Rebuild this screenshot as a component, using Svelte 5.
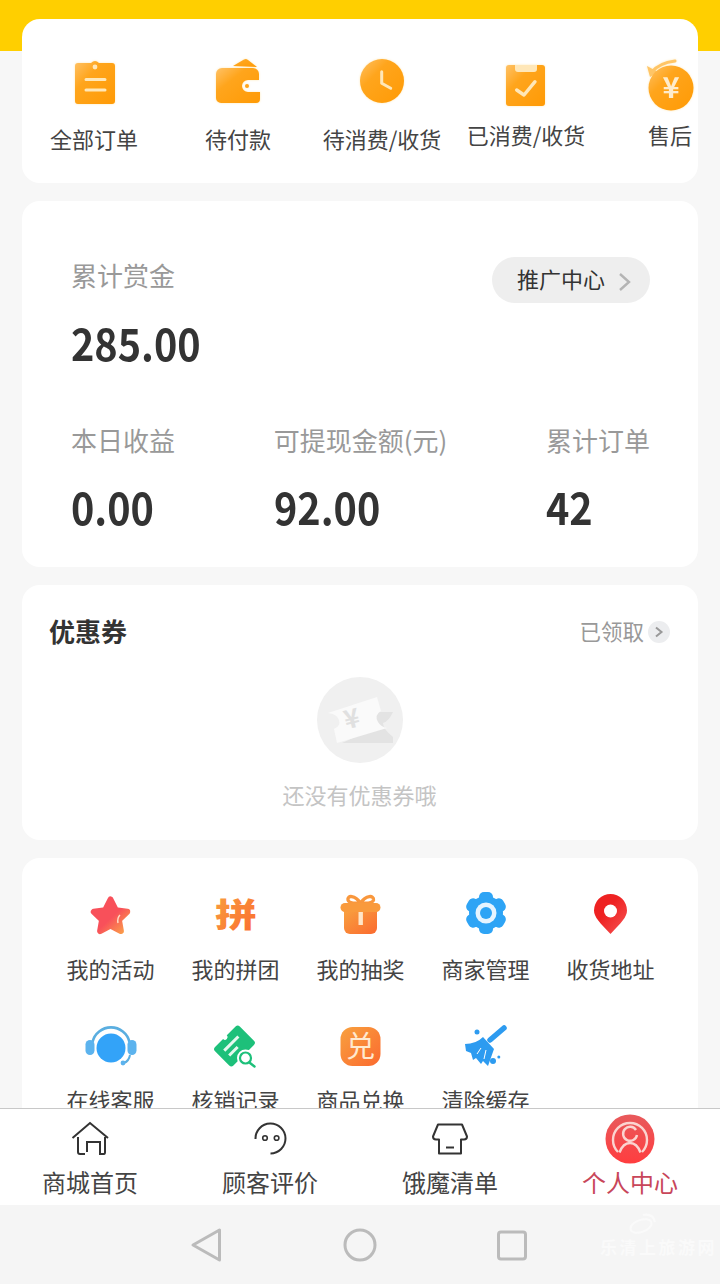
<script lang="ts">
  const orders = [
    { id: "all", label: "全部订单" },
    { id: "pay", label: "待付款" },
    { id: "wait", label: "待消费/收货" },
    { id: "done", label: "已消费/收货", raised: true },
    { id: "after", label: "售后", raised: true },
  ];
  const stats = [
    { label: "本日收益", value: "0.00" },
    { label: "可提现金额(元)", value: "92.00" },
    { label: "累计订单", value: "42" },
  ];
  const tools = [
    { id: "star", label: "我的活动" },
    { id: "pin", label: "我的拼团" },
    { id: "gift", label: "我的抽奖" },
    { id: "gear", label: "商家管理" },
    { id: "map", label: "收货地址" },
    { id: "head", label: "在线客服" },
    { id: "ticket", label: "核销记录" },
    { id: "swap", label: "商品兑换" },
    { id: "broom", label: "清除缓存" },
  ];
  const tabs = [
    { id: "home", label: "商城首页" },
    { id: "face", label: "顾客评价" },
    { id: "shop", label: "饿魔清单" },
    { id: "me", label: "个人中心", active: true },
  ];
  const pale = "#ffe7b8";
</script>

<div class="phone">
  <svg class="defs" width="0" height="0" aria-hidden="true">
    <defs>
      <linearGradient id="amber" x1="0" y1="0" x2="1" y2="1">
        <stop offset="0" stop-color="#ffc267" />
        <stop offset="0.35" stop-color="#ffa51c" />
        <stop offset="1" stop-color="#ff9a05" />
      </linearGradient>
      <linearGradient id="tang" x1="0" y1="0" x2="1" y2="1">
        <stop offset="0" stop-color="#f8a13f" />
        <stop offset="1" stop-color="#fb6a2f" />
      </linearGradient>
      <linearGradient id="rose" x1="0" y1="0" x2="1" y2="1">
        <stop offset="0.55" stop-color="#f8505a" />
        <stop offset="1" stop-color="#fba24a" />
      </linearGradient>
      <linearGradient id="redpin" x1="0" y1="0" x2="1" y2="1">
        <stop offset="0.4" stop-color="#ee2222" />
        <stop offset="1" stop-color="#f65555" />
      </linearGradient>
      <linearGradient id="redme" x1="0" y1="0" x2="0" y2="1">
        <stop offset="0" stop-color="#e85a5c" />
        <stop offset="1" stop-color="#ff3d3f" />
      </linearGradient>
    </defs>
  </svg>

  <div class="scroll">
    <div class="hero"></div>
    <div class="cards">
      <section class="card orders">
        {#each orders as o}
          <div class="order" class:raised={o.raised}>
            <svg class="order-ico" viewBox="0 0 50 52" width="50" height="52">
              {#if o.id === "all"}
                <path d="M6 9a3 3 0 0 1 3-3h13q4-4 8 0h13a3 3 0 0 1 3 3v35a3 3 0 0 1-3 3H9a3 3 0 0 1-3-3z" fill="url(#amber)" />
                <circle cx="26" cy="10" r="2.400" fill={pale} />
                <path d="M17 22.500h19M17 33h19" stroke={pale} stroke-width="3" stroke-linecap="round" />
              {:else if o.id === "pay"}
                <path d="M20 9L31 2.500q2-1 4 .5L44 10z" fill="url(#amber)" />
                <path d="M3 17a6 6 0 0 1 6-6h31a6 6 0 0 1 6 6v6H35a6 6 0 0 0 0 12h12v7a4 4 0 0 1-4 4H8a5 5 0 0 1-5-5z" fill="url(#amber)" />
                <circle cx="34" cy="29" r="2" fill="#ffa51c" />
              {:else if o.id === "wait"}
                <circle cx="25" cy="24" r="22" fill="url(#amber)" />
                <path d="M24.700 14.700V26.300l9 5" fill="none" stroke={pale} stroke-width="3" stroke-linecap="round" stroke-linejoin="round" />
              {:else if o.id === "done"}
                <path d="M5 11a3 3 0 0 1 3-3h33a3 3 0 0 1 3 3v35a3 3 0 0 1-3 3H8a3 3 0 0 1-3-3z" fill="url(#amber)" />
                <path d="M14 8h22v4a3 3 0 0 1-3 3H17a3 3 0 0 1-3-3z" fill={pale} />
                <path d="M15.700 33l7.300 5 11-13.300" fill="none" stroke={pale} stroke-width="3.400" stroke-linecap="round" stroke-linejoin="round" />
              {:else}
                <path d="M7 15Q14 6 30 4" fill="none" stroke="#ffc566" stroke-width="3" stroke-linecap="round" />
                <path d="M2 9l3 11 8-5z" fill="#ffc566" />
                <circle cx="26" cy="31" r="22.500" fill="url(#amber)" />
                <text x="26" y="41" class="yen">¥</text>
              {/if}
            </svg>
            <div class="order-label">{o.label}</div>
          </div>
        {/each}
      </section>

      <section class="card stats">
        <div class="stat-top">
          <div class="stat">
            <div class="stat-label">累计赏金</div>
            <div class="stat-value">285.00</div>
          </div>
          <div class="promo">
            推广中心
            <svg viewBox="0 0 14 20" width="14" height="20">
              <path d="M2 2l9 8-9 8" fill="none" stroke="#b4b4b4" stroke-width="2.400" />
            </svg>
          </div>
        </div>
        <div class="stat-row">
          {#each stats as s}
            <div class="stat">
              <div class="stat-label">{s.label}</div>
              <div class="stat-value">{s.value}</div>
            </div>
          {/each}
        </div>
      </section>

      <section class="card coupon">
        <div class="coupon-head">
          <div class="coupon-title">优惠券</div>
          <div class="coupon-more">
            已领取
            <span class="more-dot">
              <svg viewBox="0 0 10 12" width="10" height="12">
                <path d="M2 1.500L7.500 6 2 10.500" fill="none" stroke="#999" stroke-width="2" />
              </svg>
            </span>
          </div>
        </div>
        <div class="empty">
          <svg viewBox="0 0 86 86" width="86" height="86">
            <circle cx="43" cy="43" r="43" fill="#f0f0f0" />
            <path d="M25 66H76V60Q66 52 66 46 72 44 76 35H57L60 50z" fill="#e3e3e3" />
            <path d="M11 36L60 20l4 14q-7 4-3 11 3 5 9 6l-50 15-3-14q7-3 5-9-2-6-11-7z" fill="#fafafa" />
            <text x="35" y="51" class="empty-yen" transform="rotate(-14 35 43)">¥</text>
          </svg>
          <div class="empty-text">还没有优惠券哦</div>
        </div>
      </section>

      <section class="card tools">
        {#each tools as t}
          <div class="tool">
            <svg class="tool-ico" viewBox="0 0 48 48" width="48" height="48">
              {#if t.id === "star"}
                <path d="M23.500 8.500l5.300 10.700 11.400 1.600-8.300 8 2 11.200-10.400-5.500-10.400 5.500 2-11.200-8.300-8 11.400-1.600z" fill="url(#rose)" stroke="url(#rose)" stroke-width="6" stroke-linejoin="round" />
                <path d="M33 24q-3 3-2 8" fill="none" stroke="#ffd9c4" stroke-width="1.500" />
              {:else if t.id === "pin"}
                <text class="pin-glyph" transform="translate(24 36) scale(1.050 .82)">拼</text>
              {:else if t.id === "gift"}
                <path d="M23.500 12C18 4 10 4 11 9c.5 3 6 3.500 12.500 3C30 12.500 36 12 36.500 9c.5-5-7.500-5-13 3z" fill="none" stroke="#f9973c" stroke-width="3.400" />
                <path d="M7 19h33v18a6 6 0 0 1-6 6H13a6 6 0 0 1-6-6z" fill="url(#tang)" />
                <rect x="3.500" y="12" width="40" height="9" rx="4.500" fill="#f99a3c" />
                <rect x="21.500" y="21" width="4.400" height="13" fill="#ffe6c8" />
              {:else if t.id === "gear"}
                <g fill="#2ea4f5" transform="translate(0 -2)">
                  <circle cx="24" cy="24" r="17" />
                  {#each [0, 60, 120] as a}
                    <rect x="17" y="3" width="14" height="42" rx="5" transform="rotate({a} 24 24)" />
                  {/each}
                </g>
                <circle cx="24" cy="22" r="10.500" fill="#e6f4ff" />
                <circle cx="24" cy="22" r="6" fill="#2ea4f5" />
              {:else if t.id === "map"}
                <path d="M23.500 43C13 32 7 26 7 19.500a16.500 16.500 0 0 1 33 0c0 6.500-6 12.500-16.500 23.500z" fill="url(#redpin)" />
                <circle cx="23.500" cy="20" r="6.500" fill="#fff" />
              {:else if t.id === "head"}
                <path d="M5.500 20a19 19 0 0 1 37 0" fill="none" stroke="#5aaee0" stroke-width="2.600" />
                <rect x="-1.500" y="18" width="9" height="15" rx="4.500" fill="#5cb3ee" />
                <rect x="40.500" y="18" width="9" height="15" rx="4.500" fill="#5cb3ee" />
                <circle cx="24" cy="26" r="14.500" fill="#33a3f8" />
                <path d="M43 33q-1 6-6 8" fill="none" stroke="#5aaee0" stroke-width="2" />
                <circle cx="36" cy="41" r="2.400" fill="#5cb3ee" />
              {:else if t.id === "ticket"}
                <g transform="rotate(-45 22.500 24)">
                  <rect x="5" y="11" width="35" height="26" rx="3" fill="#1dc07a" />
                  <circle cx="22" cy="11" r="2.600" fill="#fff" />
                  <circle cx="22" cy="37" r="2.600" fill="#fff" />
                  <path d="M12 20h20M12 27h12" stroke="#e6f8ef" stroke-width="3" />
                </g>
                <circle cx="33.500" cy="36" r="8.500" fill="#fff" />
                <circle cx="33.500" cy="36" r="5.500" fill="none" stroke="#1dc07a" stroke-width="2.200" />
                <path d="M38 41l4.500 3.500" stroke="#1dc07a" stroke-width="2.400" stroke-linecap="round" />
              {:else if t.id === "swap"}
                <rect x="3.500" y="5" width="40" height="39" rx="12" fill="url(#tang)" />
                <text x="23.500" y="35" class="swap-glyph">兑</text>
              {:else}
                <path d="M42 6L28 18" stroke="#2d9bf0" stroke-width="5.500" stroke-linecap="round" />
                <path d="M21 15L32 27 26 44 21 39 19 42 14 36 11 38 9 31 4 29 3 22Q14 22 21 15z" fill="#2d9bf0" />
                <path d="M19 26l-4 6M24 28l-2 9" stroke="#fff" stroke-width="1" />
                <circle cx="15" cy="10" r="2.500" fill="#2d9bf0" />
                <circle cx="31" cy="39" r="3" fill="#2d9bf0" />
                <circle cx="36.800" cy="35" r="1.500" fill="#2d9bf0" />
              {/if}
            </svg>
            <div class="tool-label">{t.label}</div>
          </div>
        {/each}
      </section>
    </div>
  </div>

  <nav class="tabbar">
    {#each tabs as t}
      <div class="tab" class:active={t.active}>
        <svg class="tab-ico" viewBox="0 0 50 50" width="50" height="50">
          {#if t.id === "home"}
            <g fill="none" stroke="#333" stroke-width="2">
              <path d="M7.500 23L25 8l18 15" />
              <path d="M13 22v15q0 2 2 2h5M22 37V27h13v12h4q1 0 1-2V22" />
            </g>
          {:else if t.id === "face"}
            <g fill="none" stroke="#333">
              <path d="M10.500 24a15 15 0 1 1 15 14.500" stroke-width="2" />
              <circle cx="20" cy="23" r="2.300" stroke-width="1.600" />
              <circle cx="31.600" cy="23" r="2.300" stroke-width="1.600" />
            </g>
          {:else if t.id === "shop"}
            <g fill="none" stroke="#333" stroke-width="2" stroke-linejoin="round">
              <path d="M13 9.500h24l5 12q0 3-3 3h-3v14H14v-14h-3q-3 0-3-3z" />
              <path d="M21 32.500h8" />
            </g>
          {:else}
            <circle cx="25" cy="24" r="24.500" fill="url(#redme)" />
            <g fill="none" stroke="#fbd4d0" stroke-width="2.400">
              <path d="M13 37a17 17 0 1 1 24 0" />
              <path d="M31 15a7 7 0 1 0 1 5" />
              <path d="M14.500 37.500Q18 28 25 28t10.500 9.500" />
            </g>
          {/if}
        </svg>
        <div class="tab-label">{t.label}</div>
      </div>
    {/each}
  </nav>

  <div class="navbar">
    <svg class="nav-back" viewBox="0 0 32 36" width="32" height="36">
      <path d="M3 18L29.500 3v30z" fill="none" stroke="#bbb" stroke-width="3" stroke-linejoin="round" />
    </svg>
    <svg class="nav-home" viewBox="0 0 36 36" width="36" height="36">
      <circle cx="18" cy="18" r="15" fill="none" stroke="#bbb" stroke-width="3" />
    </svg>
    <svg viewBox="0 0 36 36" width="36" height="36">
      <rect x="4.500" y="5" width="27" height="27" rx="2.500" fill="none" stroke="#bbb" stroke-width="3" />
    </svg>
    <div class="watermark">
      <svg viewBox="0 0 60 24" width="60" height="24">
        <g fill="none" stroke="#fafafa" stroke-width="2">
          <ellipse cx="12" cy="15" rx="11" ry="6" transform="rotate(-20 12 15)" />
          <path d="M14 4q10-2 12 7" />
        </g>
      </svg>
      <span>乐清上旅游网</span>
    </div>
  </div>
</div>

<style>
  :global(body) {
    background: #f7f7f7;
  }
  .phone {
    position: relative;
    display: flex;
    flex-direction: column;
    width: 720px;
    height: 1284px;
    overflow: hidden;
    font-family: "Noto Sans CJK SC", "Noto Sans", sans-serif;
    background: #f7f7f7;
    color: #333;
  }
  svg {
    overflow: visible;
  }
  .defs {
    position: absolute;
  }
  .scroll {
    flex: 1;
    min-height: 0;
    overflow: hidden;
  }
  .hero {
    height: 51px;
    background: #ffcf00;
  }
  .cards {
    display: flex;
    flex-direction: column;
    gap: 18px;
    margin: -32px 22px 0;
  }
  .card {
    background: #fff;
    border-radius: 18px;
  }

  .orders {
    display: flex;
    height: 164px;
    overflow: hidden;
  }
  .order {
    flex: 0 0 144px;
    display: flex;
    flex-direction: column;
    align-items: center;
    padding-top: 38px;
  }
  .order-ico {
    display: block;
    filter: drop-shadow(0 0 1px #ffe9b8);
  }
  .order-label {
    margin-top: 14px;
    font-size: 22px;
    line-height: 30px;
    white-space: nowrap;
    color: #444;
  }
  .raised .order-label {
    margin-top: 10px;
  }
  .yen {
    font-size: 29px;
    font-weight: 700;
    text-anchor: middle;
    fill: #ffeccb;
  }

  .stats {
    height: 366px;
    box-sizing: border-box;
    padding: 54px 48px 0 49px;
  }
  .stat-top {
    display: flex;
    justify-content: space-between;
    align-items: flex-start;
  }
  .stat-label {
    font-size: 26px;
    line-height: 40px;
    color: #999;
  }
  .stat-value {
    margin-top: 23px;
    font-size: 44px;
    line-height: 48px;
    font-weight: 700;
    color: #333;
    transform: scaleX(0.9);
    transform-origin: left center;
  }
  .stat-row {
    display: flex;
    justify-content: space-between;
    margin-top: 54px;
  }
  .stat-row .stat-value {
    margin-top: 22px;
  }
  .promo {
    display: flex;
    align-items: center;
    gap: 13px;
    height: 46px;
    width: 158px;
    margin-top: 2px;
    box-sizing: border-box;
    padding: 0 0 4px 25px;
    border-radius: 23px;
    background: #eeeeee;
    font-size: 22px;
    color: #333;
  }
  .promo svg {
    margin-top: 8px;
  }

  .coupon {
    height: 255px;
    box-sizing: border-box;
    padding: 26px 28px 0 27px;
  }
  .coupon-head {
    display: flex;
    justify-content: space-between;
    align-items: center;
    height: 38px;
  }
  .coupon-title {
    font-size: 26px;
    font-weight: 700;
    color: #333;
  }
  .coupon-more {
    display: flex;
    align-items: center;
    gap: 4px;
    font-size: 21.500px;
    color: #999;
  }
  .more-dot {
    display: flex;
    align-items: center;
    justify-content: center;
    width: 22px;
    height: 22px;
    margin-top: 4px;
    border-radius: 50%;
    background: #ecedef;
  }
  .empty {
    display: flex;
    flex-direction: column;
    align-items: center;
    margin-top: 28px;
  }
  .empty svg {
    display: block;
  }
  .empty-yen {
    font-size: 26px;
    font-weight: 700;
    text-anchor: middle;
    fill: #e0e0e0;
  }
  .empty-text {
    margin-top: 16px;
    font-size: 22px;
    line-height: 30px;
    color: #c4c4c4;
  }

  .tools {
    display: grid;
    grid-template-columns: repeat(5, 125px);
    grid-auto-rows: 131px;
    padding: 33px 26px 40px;
  }
  .tool {
    display: flex;
    flex-direction: column;
    align-items: center;
  }
  .tool-ico {
    display: block;
  }
  .tool-label {
    margin-top: 14px;
    font-size: 22px;
    line-height: 30px;
    color: #444;
    white-space: nowrap;
  }
  .pin-glyph {
    font-size: 40px;
    font-weight: 900;
    text-anchor: middle;
    fill: url(#tang);
  }
  .swap-glyph {
    font-size: 29px;
    font-weight: 400;
    text-anchor: middle;
    fill: #ffe9cf;
  }

  .tabbar {
    position: relative;
    display: grid;
    grid-template-columns: repeat(4, 1fr);
    height: 97px;
    box-sizing: border-box;
    border-top: 1px solid #c8c8c8;
    background: #fff;
  }
  .tab {
    display: flex;
    flex-direction: column;
    align-items: center;
    padding-top: 6px;
  }
  .tab-ico {
    display: block;
  }
  .tab-label {
    margin-top: 2px;
    font-size: 24px;
    line-height: 30px;
    color: #444;
  }
  .tab.active .tab-label {
    color: #c8465a;
  }

  .navbar {
    position: relative;
    display: flex;
    align-items: center;
    height: 79px;
    padding-left: 190px;
    background: #f5f5f5;
  }
  .nav-back {
    margin-right: 120px;
  }
  .nav-home {
    margin-right: 116px;
  }
  .watermark {
    position: absolute;
    left: 600px;
    top: 6px;
    display: flex;
    flex-direction: column;
    align-items: center;
    font-size: 17px;
    line-height: 24px;
    font-weight: 700;
    letter-spacing: 2.500px;
    white-space: nowrap;
    color: #fafafa;
  }
</style>
